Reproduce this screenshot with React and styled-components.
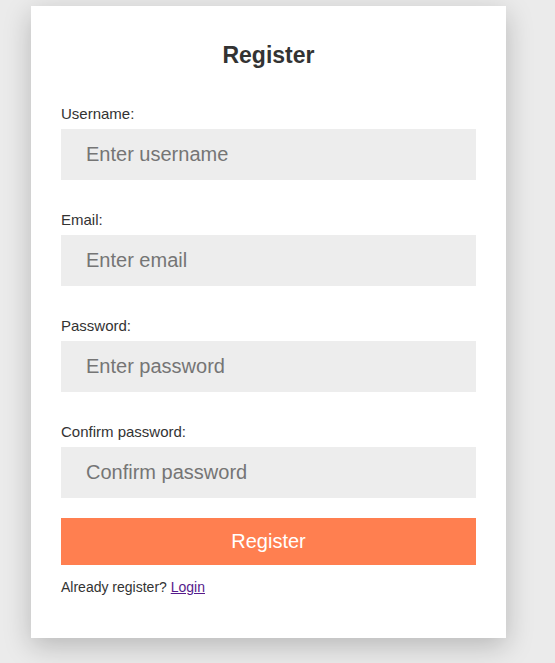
import React from "react";
import styled, { createGlobalStyle } from "styled-components";

const GlobalStyle = createGlobalStyle`
  html, body {
    margin: 0;
    padding: 0;
    background: #ebebeb;
    font-family: "Liberation Sans", Arial, sans-serif;
  }
  * { box-sizing: border-box; }
`;

const Page = styled.div`
  padding: 6px 0 0 31px;
  min-height: 663px;
`;

const Card = styled.form`
  width: 475px;
  background: #ffffff;
  padding: 35px 30px 43px;
  box-shadow: 0 8px 26px rgba(0, 0, 0, 0.22);
  display: flex;
  flex-direction: column;
`;

const Title = styled.h2`
  margin: 0 0 36px;
  font-size: 23px;
  line-height: 28px;
  font-weight: 700;
  color: #333333;
  text-align: center;
`;

const Field = styled.div`
  display: flex;
  flex-direction: column;
  margin-bottom: ${(p) => (p.$last ? "20px" : "31px")};
`;

const Label = styled.label`
  font-size: 15px;
  line-height: 17px;
  color: #333333;
  margin-bottom: 7px;
`;

const Input = styled.input`
  height: 51px;
  width: 100%;
  border: none;
  outline: none;
  background: #ededed;
  padding: 0 25px;
  font-family: "Liberation Sans", Arial, sans-serif;
  font-size: 20px;
  color: #333333;
  &::placeholder {
    color: #757575;
  }
`;

const Button = styled.button`
  height: 47px;
  width: 100%;
  border: none;
  background: #ff7f50;
  color: #ffffff;
  font-family: "Liberation Sans", Arial, sans-serif;
  font-size: 20px;
  cursor: pointer;
`;

const Footer = styled.p`
  margin: 14px 0 0;
  font-size: 14px;
  line-height: 16px;
  color: #333333;
`;

const Link = styled.a`
  color: #551a8b;
  text-decoration: underline;
`;

const fields = [
  { id: "username", label: "Username:", placeholder: "Enter username", type: "text" },
  { id: "email", label: "Email:", placeholder: "Enter email", type: "email" },
  { id: "password", label: "Password:", placeholder: "Enter password", type: "password" },
  { id: "confirm", label: "Confirm password:", placeholder: "Confirm password", type: "password" },
];

export default function App() {
  return (
    <>
      <GlobalStyle />
      <Page>
        <Card onSubmit={(e) => e.preventDefault()}>
          <Title>Register</Title>
          {fields.map((f, i) => (
            <Field key={f.id} $last={i === fields.length - 1}>
              <Label htmlFor={f.id}>{f.label}</Label>
              <Input id={f.id} type={f.type} placeholder={f.placeholder} />
            </Field>
          ))}
          <Button type="submit">Register</Button>
          <Footer>
            Already register? <Link href="#">Login</Link>
          </Footer>
        </Card>
      </Page>
    </>
  );
}
